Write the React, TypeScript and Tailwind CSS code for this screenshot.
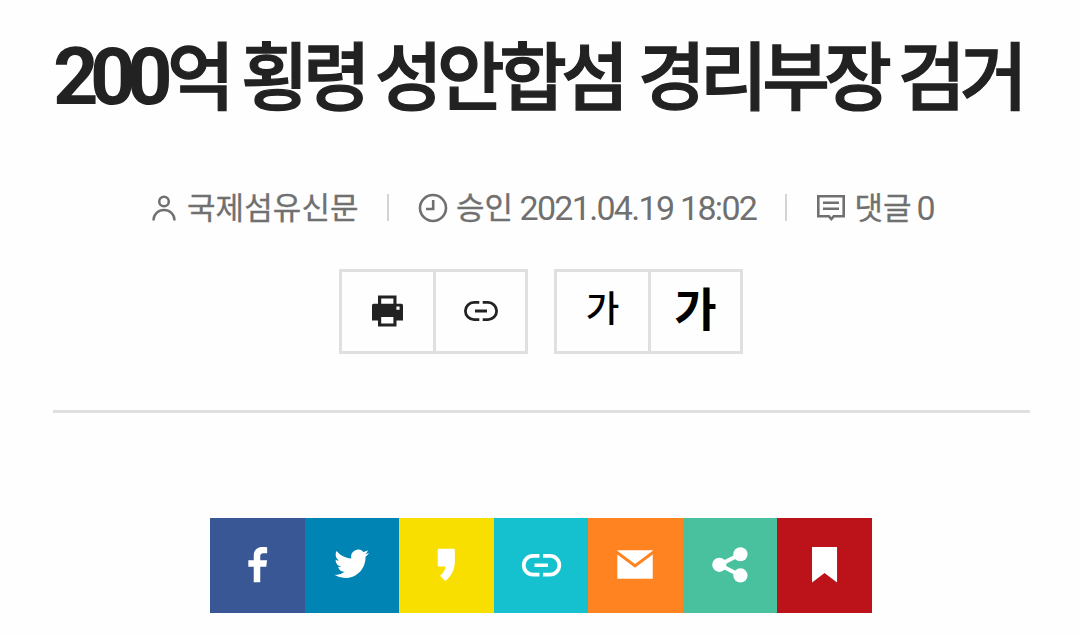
import type { ReactNode } from "react";

const titleWords = [
  { text: "억", className: "w-[74px]" },
  { text: "횡령", className: "w-[134px]" },
  { text: "성안합섬", className: "w-[263px]" },
  { text: "경리부장", className: "w-[260px]" },
  { text: "검거", className: "w-[120px]" },
];

function LinkIcon({ className }: { className?: string }) {
  return (
    <svg viewBox="0 0 34 20" className={className} fill="none" stroke="currentColor">
      <path
        d="M15.3 1.4H10A8.6 8.6 0 0 0 10 18.6H15.3M18.7 1.4H24A8.6 8.6 0 0 1 24 18.6H18.7M11 10H23"
        strokeWidth="2.8"
      />
    </svg>
  );
}

function Divider() {
  return <span className="mb-0.5 h-[27px] w-0.5 shrink-0 bg-[#d4d4d4]" />;
}

function ToolButton({ children, last }: { children: ReactNode; last?: boolean }) {
  return (
    <button
      className={
        last
          ? "flex flex-1 items-center justify-center"
          : "flex w-[94px] items-center justify-center border-r-3 border-[#e0e0e0]"
      }
    >
      {children}
    </button>
  );
}

const shares = [
  {
    name: "facebook",
    bg: "bg-[#3a5795]",
    icon: (
      <path
        d="M43.7 64V48.6H38.3V42H43.7V37.7C43.7 32 47 28.7 52.2 28.7C54.5 28.7 56.5 28.9 57.1 29V35H53.5C50.8 35 50.2 36.3 50.2 38.3V42H57L56.2 48.6H50.2V64Z"
      />
    ),
  },
  {
    name: "twitter",
    bg: "bg-[#0084b4]",
    icon: (
      <path
        transform="translate(29.2 28.2) scale(1.45)"
        d="M23.954 4.569a10 10 0 0 1-2.825.775 4.958 4.958 0 0 0 2.163-2.723c-.951.555-2.005.959-3.127 1.184a4.92 4.92 0 0 0-8.384 4.482C7.691 8.094 4.066 6.13 1.64 3.161a4.822 4.822 0 0 0-.666 2.475c0 1.71.87 3.213 2.188 4.096a4.904 4.904 0 0 1-2.228-.616v.061a4.923 4.923 0 0 0 3.946 4.827 4.996 4.996 0 0 1-2.212.085 4.937 4.937 0 0 0 4.604 3.417 9.868 9.868 0 0 1-6.102 2.105c-.39 0-.779-.023-1.17-.067a13.995 13.995 0 0 0 7.557 2.209c9.054 0 13.999-7.496 13.999-13.986 0-.209 0-.42-.015-.63a9.936 9.936 0 0 0 2.46-2.548z"
      />
    ),
  },
  {
    name: "kakaostory",
    bg: "bg-[#f9df00]",
    icon: (
      <path d="M40 30.5H54.5Q55.8 30.5 55.8 31.8V43C55.8 52 51.5 58.8 46.2 62.8L41 57.6C44.3 54.7 46.4 51.3 46.6 48.2H40Q38.7 48.2 38.7 46.9V31.8Q38.7 30.5 40 30.5Z" />
    ),
  },
  {
    name: "url",
    bg: "bg-[#15c0cf]",
    icon: (
      <path
        d="M45.4 37.7H39A9.3 9.3 0 0 0 39 56.3H45.4M49 37.7H56A9.3 9.3 0 0 1 56 56.3H49M40.5 47H54"
        fill="none"
        stroke="currentColor"
        strokeWidth="3.7"
      />
    ),
  },
  {
    name: "email",
    bg: "bg-[#ff8421]",
    icon: (
      <path d="M29.3 32H64.7V32.6L47 45.8L29.3 32.6ZM29.3 36.2L47 49.6L64.7 36.2V60.4H29.3Z" />
    ),
  },
  {
    name: "share",
    bg: "bg-[#49c19f]",
    icon: (
      <>
        <circle cx="36.3" cy="46.6" r="7.1" />
        <circle cx="57.4" cy="36" r="7.1" />
        <circle cx="57.4" cy="57.2" r="7.1" />
        <path d="M57.4 36L36.3 46.6L57.4 57.2" fill="none" stroke="currentColor" strokeWidth="4" />
      </>
    ),
  },
  {
    name: "bookmark",
    bg: "bg-[#bb1319]",
    icon: <path d="M35 28.7H60V64.3L47.5 54.8L35 64.3Z" />,
  },
];

export default function App() {
  return (
    <div className="h-[636px] w-[1080px] overflow-hidden bg-[#fefefe] font-['Roboto','Noto_Sans_CJK_KR',sans-serif]">
      {/* Title */}
      <h1 className="flex h-[150px] items-baseline pt-[22px] pl-[53px] leading-[100px] whitespace-nowrap text-[#222]">
        <span className="w-[114px] text-[79.5px] font-bold tracking-[-8.6px]">200</span>
        {titleWords.map((word) => (
          <span
            key={word.text}
            className={`shrink-0 font-['Noto_Sans_CJK_KR'] text-[73.5px] font-medium tracking-[-5.5px] [-webkit-text-stroke:1.3px_#222] ${word.className}`}
          >
            {word.text}
          </span>
        ))}
      </h1>

      {/* Byline */}
      <div className="flex h-[116px] items-center text-[#707070]">
        <div className="flex w-[387px] items-center pl-[152px]">
          <svg viewBox="0 0 24 26" className="h-[26px] w-6 shrink-0" fill="none" stroke="currentColor" strokeWidth="2.5">
            <circle cx="12" cy="6.5" r="4.8" />
            <path d="M1.6 25.5V24.5A10.4 9.4 0 0 1 22.4 24.5V25.5" />
          </svg>
          <span className="mb-[3px] ml-[11px] font-['Noto_Sans_CJK_KR'] text-[31px] tracking-[0.1px] whitespace-nowrap [-webkit-text-stroke:0.3px_#707070]">
            국제섬유신문
          </span>
        </div>
        <Divider />
        <div className="flex w-[396px] items-center pl-[29px]">
          <svg viewBox="0 0 30 30" className="size-[30px] shrink-0" fill="none" stroke="currentColor" strokeWidth="2.6">
            <circle cx="15" cy="15" r="13" />
            <path d="M15.2 7V16H8" />
          </svg>
          <span className="mb-[3px] ml-2 w-[63.5px] font-['Noto_Sans_CJK_KR'] text-[31px] whitespace-nowrap [-webkit-text-stroke:0.3px_#707070]">
            승인
          </span>
          <span className="text-[34px] tracking-[-1.7px] whitespace-nowrap">2021.04.19 18:02</span>
        </div>
        <Divider />
        <div className="flex items-center pl-[28.5px]">
          <svg viewBox="0 0 30 28" className="h-7 w-[30px] shrink-0" fill="none" stroke="currentColor" strokeWidth="2.6">
            <path d="M2.3 2.3H27.7V22.3H17.7L15.3 25L12.9 22.3H2.3Z" />
            <path d="M7 8.8H23M7 14.8H23" />
          </svg>
          <span className="mb-[3px] ml-[9px] w-[62px] font-['Noto_Sans_CJK_KR'] text-[31px] whitespace-nowrap [-webkit-text-stroke:0.3px_#707070]">
            댓글
          </span>
          <span className="text-[34px]">0</span>
        </div>
      </div>

      {/* Tools */}
      <div className="mr-[50px] ml-[53px] flex h-[147px] gap-[26px] border-b-3 border-[#e0e0e0] pt-[3px] pl-[286px]">
        <div className="flex h-[85px] w-[189px] border-3 border-[#e0e0e0] text-[#222]">
          <ToolButton>
            <svg viewBox="0 0 31 32" className="mb-0.5 h-8 w-[31px]" fill="currentColor">
              <path
                fillRule="evenodd"
                d="M6 .5H24.5V8.8H29.5Q31 8.8 31 10.3V25.5H24.5V31.5H6V25.5H0V10.3Q0 8.8 1.5 8.8H6ZM9.2 3.6V8.8H21.4V3.6ZM9.2 22V28.5H21.4V22ZM24.4 11.5V14.7H27.6V11.5Z"
              />
            </svg>
          </ToolButton>
          <ToolButton last>
            <LinkIcon className="mb-0.5 h-5 w-[34px]" />
          </ToolButton>
        </div>
        <div className="flex h-[85px] w-[189px] border-3 border-[#e0e0e0] font-['Noto_Sans_CJK_KR'] text-black">
          <ToolButton>
            <span className="mb-2 text-[36.5px] leading-none font-medium">가</span>
          </ToolButton>
          <ToolButton last>
            <span className="mb-3 text-[46px] leading-none font-bold">가</span>
          </ToolButton>
        </div>
      </div>

      {/* Share */}
      <div className="mt-[105px] ml-[210px] flex h-[94.5px] w-[662px] text-white">
        {shares.map((share) => (
          <button key={share.name} className={`flex-1 ${share.bg}`}>
            <svg viewBox="0 0 94.5 94" className="size-full" fill="currentColor">
              {share.icon}
            </svg>
          </button>
        ))}
      </div>
    </div>
  );
}
